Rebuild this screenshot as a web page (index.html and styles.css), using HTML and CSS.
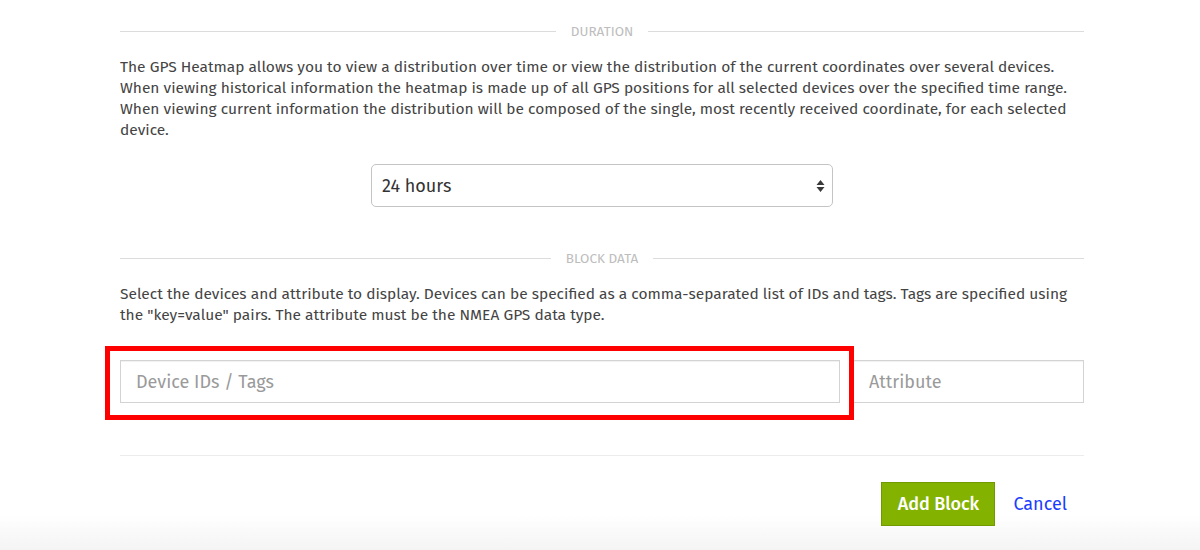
FILE: index.html
```html
<!DOCTYPE html>
<html>
<head>
<meta charset="utf-8">
<link rel="stylesheet" href="styles.css">
</head>
<body>
<div class="page">
  <div class="section-head"><span class="rule"></span><span class="label">DURATION</span><span class="rule"></span></div>
  <p class="desc">The GPS Heatmap allows you to view a distribution over time or view the distribution of the current coordinates over several devices. When viewing historical information the heatmap is made up of all GPS positions for all selected devices over the specified time range. When viewing current information the distribution will be composed of the single, most recently received coordinate, for each selected device.</p>
  <div class="select-row">
    <div class="select-wrap">
      <select class="select"><option>24 hours</option></select>
      <svg class="select-arrows" width="9" height="14" viewBox="0 0 9 14"><path d="M4.5 1 L8.5 6 L0.5 6 Z M0.5 8 L8.5 8 L4.5 13 Z" fill="#3a3a3a"/></svg>
    </div>
  </div>
  <div class="section-head head-2"><span class="rule"></span><span class="label">BLOCK DATA</span><span class="rule"></span></div>
  <p class="desc">Select the devices and attribute to display. Devices can be specified as a comma-separated list of IDs and tags. Tags are specified using the "key=value" pairs. The attribute must be the NMEA GPS data type.</p>
  <div class="fields">
    <div class="field-main">
      <input class="input" type="text" placeholder="Device IDs / Tags">
      <span class="highlight"></span>
    </div>
    <input class="input input-attr" type="text" placeholder="Attribute">
  </div>
  <div class="divider"></div>
  <div class="actions">
    <button class="btn-add">Add Block</button>
    <a class="cancel" href="#">Cancel</a>
  </div>
</div>
</body>
</html>
```
FILE: styles.css
```css
html, body {
  margin: 0;
  padding: 0;
}
body {
  width: 1200px;
  height: 550px;
  overflow: hidden;
  background: linear-gradient(to bottom, #ffffff 0, #ffffff 515px, #f4f4f4 550px);
  font-family: "Fira Sans", Roboto, "Liberation Sans", sans-serif;
  color: #444;
}
.page {
  width: 964px;
  margin-left: 120px;
  padding-top: 21px;
}
.section-head {
  display: flex;
  align-items: center;
  height: 20px;
  gap: 15px;
  margin-bottom: 16px;
}
.head-2 {
  margin-top: 41px;
}
.rule {
  flex: 1;
  border-top: 1px solid #dcdcdc;
}
.label {
  font-size: 13.5px;
  color: #bdbdbd;
}
.desc {
  margin: 0;
  font-size: 15.5px;
  line-height: 21px;
  color: #444;
}
.select-row {
  display: flex;
  justify-content: center;
  margin-top: 23px;
}
.select-wrap {
  position: relative;
  width: 462px;
  height: 43px;
}
.select {
  -webkit-appearance: none;
  appearance: none;
  width: 100%;
  height: 100%;
  box-sizing: border-box;
  border: 1px solid #c4c4c4;
  border-radius: 5px;
  background: #fff;
  padding: 0 10px;
  font-family: inherit;
  font-size: 18px;
  color: #333;
}
.select-arrows {
  position: absolute;
  right: 8px;
  top: 15px;
  pointer-events: none;
}
.fields {
  display: flex;
  gap: 13px;
  margin-top: 34px;
}
.field-main {
  position: relative;
  flex: 0 0 720px;
  display: flex;
}
.input {
  box-sizing: border-box;
  height: 43px;
  border: 1px solid #d3d3d3;
  box-shadow: inset 0 1px 1px rgba(0,0,0,0.06);
  padding: 0 15px;
  font-family: inherit;
  font-size: 18px;
  color: #333;
  background: #fff;
  outline: none;
}
.input::placeholder {
  color: #9a9a9a;
}
.field-main .input {
  width: 100%;
}
.input-attr {
  flex: 1;
  width: 0;
}
.highlight {
  position: absolute;
  left: -15px;
  top: -14px;
  right: -14px;
  bottom: -17px;
  border: 5px solid #ff0000;
  pointer-events: none;
}
.divider {
  margin-top: 52px;
  border-top: 1px solid #ececec;
}
.actions {
  display: flex;
  justify-content: flex-end;
  align-items: center;
  margin-top: 26px;
}
.btn-add {
  width: 114px;
  height: 44px;
  box-sizing: border-box;
  background: #83b200;
  border: 1px solid #709a00;
  color: #fff;
  font-family: inherit;
  font-size: 18px;
  font-weight: 500;
  padding: 0;
}
.cancel {
  margin-left: 18px;
  margin-right: 17px;
  color: #1a3dff;
  font-size: 18px;
  text-decoration: none;
}
```
